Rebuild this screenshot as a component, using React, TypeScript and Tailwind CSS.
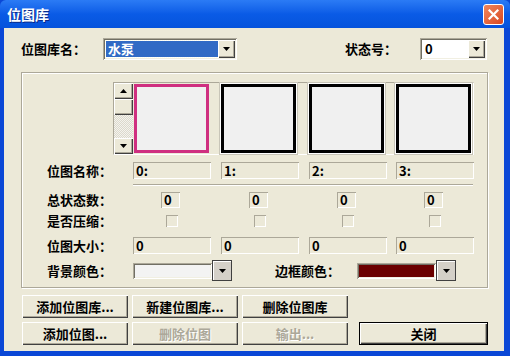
import React from 'react';

const raised =
  'bg-[#ece9d8] shadow-[inset_1px_1px_0_#fff,inset_-1px_-1px_0_#404040,inset_-2px_-2px_0_#aca899]';
const sunken =
  'shadow-[inset_1px_1px_0_#aca899,inset_-1px_-1px_0_#fff,inset_2px_2px_0_#716f64,inset_-2px_-2px_0_#f1efe2]';
const flat = 'shadow-[inset_1px_1px_0_#aca899,inset_-1px_-1px_0_#fff]';

function Arrow({ up = false }: { up?: boolean }) {
  return (
    <svg width="7" height="4" viewBox="0 0 7 4">
      <polygon points={up ? '3.5,0 7,4 0,4' : '0,0 7,0 3.5,4'} fill="#000" />
    </svg>
  );
}

function Combo({ width, value, selected }: { width: number; value: string; selected?: boolean }) {
  return (
    <div className={`h-[22px] bg-white flex items-center p-[2px] ${sunken}`} style={{ width }}>
      <div className="flex-1 h-full flex items-center pl-[1px]">
        {selected ? (
          <span className="h-[16px] w-full bg-[#316ac5] text-white flex items-center pl-[2px] outline outline-1 outline-dotted outline-[#ffe]">
            {value}
          </span>
        ) : (
          <span className="pl-[2px]">{value}</span>
        )}
      </div>
      <div className={`w-[17px] h-full shrink-0 flex items-center justify-center ${raised}`}>
        <Arrow />
      </div>
    </div>
  );
}

function Field({ text = '', w = 'w-[78px]' }: { text?: string; w?: string }) {
  return (
    <div className={`${w} h-[17px] flex items-center pl-[3px] ${flat}`}>
      <span className="text-[13px] leading-none">{text}</span>
    </div>
  );
}

function Btn({ label, disabled, def, w = 'w-[106px]' }: { label: string; disabled?: boolean; def?: boolean; w?: string }) {
  return (
    <div
      className={`${w} h-[23px] flex items-center justify-center ${raised} ${def ? 'border border-black' : ''} ${
        disabled ? 'text-[#aca899] [text-shadow:1px_1px_0_#fff]' : 'text-black'
      }`}
    >
      {label}
    </div>
  );
}

function ColorPick({ color }: { color: string }) {
  return (
    <div className="flex items-center">
      <div className={`w-[79px] h-[16px] ${sunken}`} style={{ background: color }} />
      <div className="w-[20px] h-[21px] flex items-center justify-center bg-[#d4d0c8] border border-[#404040] shadow-[inset_1px_1px_0_#fff]">
        <Arrow />
      </div>
    </div>
  );
}

const cols = ['0', '1', '2', '3'];
const slots = ['w-[87px]', 'w-[88px]', 'w-[87px]', 'w-[77px]'];

export default function App() {
  return (
    <div
      className="w-[510px] h-[356px] flex flex-col bg-[#0a47d6] overflow-hidden text-[13px] font-bold text-black"
      style={{ fontFamily: "'Noto Sans CJK SC', 'Noto Sans', sans-serif" }}
    >
      {/* title bar */}
      <div className="h-[28px] flex items-center justify-between pl-[7px] pr-[6px] bg-gradient-to-b from-[#2b7bf5] via-[#0a5be6] to-[#0553dc] rounded-t-[6px]">
        <span className="text-white text-[14px] [text-shadow:1px_1px_0_#0a2a8a]">位图库</span>
        <div className="w-[21px] h-[21px] rounded-[3px] border border-white bg-gradient-to-br from-[#f0865c] to-[#d8461f] flex items-center justify-center">
          <svg width="11" height="11" viewBox="0 0 11 11">
            <path d="M1.5 1.5 L9.5 9.5 M9.5 1.5 L1.5 9.5" stroke="#fff" strokeWidth="2.2" strokeLinecap="square" />
          </svg>
        </div>
      </div>

      {/* body */}
      <div className="flex-1 ml-[4px] mr-[6px] mb-[5px] bg-[#ece9d8] flex flex-col">
        {/* top row */}
        <div className="mt-[10px] ml-[17px] h-[22px] flex items-center">
          <span className="w-[82px]">位图库名：</span>
          <Combo width={134} value="水泵" selected />
          <span className="ml-[108px] w-[75px]">状态号：</span>
          <Combo width={67} value="0" />
        </div>

        {/* group box */}
        <div className="mt-[12px] ml-[17px] w-[467px] h-[216px] border border-[#aca899] shadow-[inset_1px_1px_0_#fff,1px_1px_0_#fff] flex flex-col">
          {/* thumbnail list */}
          <div className="mt-[9px] ml-[91px] w-[361px] h-[73px] flex border-t border-l border-[#aca899] border-b border-r border-b-white border-r-white">
            <div className="w-[19px] shrink-0 h-full flex flex-col">
              <div className={`h-[16px] flex items-center justify-center ${raised}`}>
                <Arrow up />
              </div>
              <div className={`h-[16px] ${raised}`} />
              <div className="flex-1 bg-[repeating-conic-gradient(#f4f3ee_0%_25%,#dcd9cc_0%_50%)] bg-[length:2px_2px]" />
              <div className={`h-[16px] flex items-center justify-center ${raised}`}>
                <Arrow />
              </div>
            </div>
            <div className="flex">
              {cols.map((c, i) => (
                <div key={c} className={`${slots[i]} shrink-0 h-full pt-[1px] pl-[1px]`}>
                  <div
                    className={`w-[75px] h-[69px] bg-[#f0f0f0] border-[3px] ${
                      c === '0' ? 'border-[#cf2f80]' : 'border-black outline outline-1 outline-[#fff] shadow-[0_0_0_2px_#c8c5b8]'
                    }`}
                  />
                </div>
              ))}
            </div>
          </div>

          {/* names */}
          <div className="mt-[7px] ml-[25px] h-[17px] flex items-center">
            <span className="w-[86px]">位图名称：</span>
            <div className="grid grid-cols-[78px_78px_77px_77px] gap-x-[10px]">
              {cols.map((c) => (
                <Field key={c} text={`${c}:`} />
              ))}
            </div>
          </div>

          {/* separator */}
          <div className="mt-[5px] ml-[111px] w-[340px] h-[2px] border-t border-[#aca899] border-b border-b-white" />

          {/* total states */}
          <div className="mt-[6px] ml-[25px] h-[16px] flex items-center">
            <span className="w-[86px]">总状态数：</span>
            <div className="grid grid-cols-[78px_78px_77px_77px] gap-x-[10px]">
              {cols.map((c) => (
                <div key={c} className="pl-[28px]">
                  <div className={`w-[19px] h-[16px] flex items-center pl-[3px] ${flat}`}>0</div>
                </div>
              ))}
            </div>
          </div>

          {/* compressed */}
          <div className="mt-[6px] ml-[25px] h-[13px] flex items-center">
            <span className="w-[86px]">是否压缩：</span>
            <div className="grid grid-cols-[78px_78px_77px_77px] gap-x-[10px]">
              {cols.map((c) => (
                <div key={c} className="pl-[33px]">
                  <div className={`w-[12px] h-[12px] ${flat}`} />
                </div>
              ))}
            </div>
          </div>

          {/* size */}
          <div className="mt-[10px] ml-[25px] h-[17px] flex items-center">
            <span className="w-[86px]">位图大小：</span>
            <div className="grid grid-cols-[78px_78px_77px_77px] gap-x-[10px]">
              {cols.map((c) => (
                <Field key={c} text="0" />
              ))}
            </div>
          </div>

          {/* colors */}
          <div className="mt-[6px] ml-[25px] h-[21px] flex items-center">
            <span className="w-[86px]">背景颜色：</span>
            <ColorPick color="#f3f3f3" />
            <span className="ml-[43px] w-[82px]">边框颜色：</span>
            <ColorPick color="#6b0000" />
          </div>
        </div>

        {/* buttons */}
        <div className="mt-[7px] ml-[18px] flex gap-[4px]">
          <Btn label="添加位图库..." />
          <Btn label="新建位图库..." />
          <Btn label="删除位图库" />
        </div>
        <div className="mt-[4px] ml-[18px] flex gap-[4px]">
          <Btn label="添加位图..." />
          <Btn label="删除位图" disabled />
          <Btn label="输出..." disabled />
          <div className="ml-[7px]">
            <Btn label="关闭" def w="w-[129px]" />
          </div>
        </div>
      </div>
    </div>
  );
}
